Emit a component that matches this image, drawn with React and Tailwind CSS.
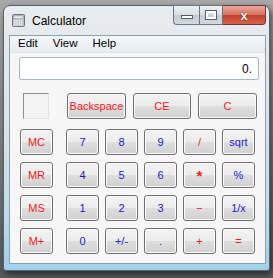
import React from "react";

const RED = "text-[#ee1c24]";
const BLUE = "text-[#2020d0]";

function Key({ label, color, w = "w-[33px]", extra = "" }) {
  return (
    <div
      className={`${w} h-[26px] rounded-[3px] border border-[#707070] bg-[linear-gradient(#f3f3f3_0%,#ececec_50%,#dfdfdf_50%,#d0d0d0_100%)] shadow-[inset_0_0_0_1px_#fbfbfb] flex items-center justify-center text-[11px] ${color} ${extra}`}
    >
      {label}
    </div>
  );
}

function CalcIcon() {
  return (
    <svg width="13" height="13" viewBox="0 0 13 13">
      <rect x="0.5" y="0.5" width="12" height="12" rx="1" fill="#b8bec6" stroke="#6c747e" />
      <rect x="2" y="2" width="9" height="2.5" fill="#eef3f8" stroke="#8a939c" strokeWidth="0.5" />
      {[0, 1, 2].map((r) =>
        [0, 1, 2, 3].map((c) => (
          <rect key={`${r}-${c}`} x={2 + c * 2.3} y={6 + r * 2.1} width="1.6" height="1.4" fill="#f4f6f8" />
        ))
      )}
    </svg>
  );
}

export default function App() {
  const rows = [
    [["MC", RED], ["7", BLUE], ["8", BLUE], ["9", BLUE], ["/", RED], ["sqrt", BLUE]],
    [["MR", RED], ["4", BLUE], ["5", BLUE], ["6", BLUE], ["*", RED, "font-bold text-[15px] pt-[3px]"], ["%", BLUE]],
    [["MS", RED], ["1", BLUE], ["2", BLUE], ["3", BLUE], ["−", RED], ["1/x", BLUE]],
    [["M+", RED], ["0", BLUE], ["+/-", BLUE], [".", BLUE], ["+", RED], ["=", RED]],
  ];

  return (
    <div className="w-[273px] h-[278px] overflow-hidden pt-[5px] pl-[3px] bg-[linear-gradient(#a8a8a8,#85888a_40%,#555a5c)] font-['Liberation_Sans',Arial,sans-serif]">
      {/* Window */}
      <div className="relative w-[267px] h-[266px] rounded-t-[7px] rounded-b-[3px] border border-[#59636d] bg-[linear-gradient(#e9ecef_0%,#dfe5ea_35%,#c4dbe9_75%,#9fd0ea_100%)] shadow-[2px_3px_6px_rgba(0,0,0,0.55)]">
        {/* Title bar */}
        <div className="h-[29px] flex items-center pl-[8px] gap-[7px]">
          <CalcIcon />
          <span className="text-[12px] text-black">Calculator</span>
        </div>

        {/* Caption buttons */}
        <div className="absolute top-[-1px] right-[3px] flex h-[20px]">
          <div className="w-[26px] h-full rounded-bl-[4px] border border-[#6b7681] border-r-0 bg-[linear-gradient(#eef1f4,#d6dce2_50%,#c3cbd3_50%,#d2dae1)] flex items-center justify-center">
            <div className="w-[12px] h-[4px] bg-white border border-[#55606a] mt-[3px]" />
          </div>
          <div className="w-[24px] h-full border border-[#6b7681] bg-[linear-gradient(#eef1f4,#d6dce2_50%,#c3cbd3_50%,#d2dae1)] flex items-center justify-center">
            <div className="w-[10px] h-[8px] border-[2px] border-white outline outline-1 outline-[#55606a]" />
          </div>
          <div className="w-[43px] h-full rounded-br-[4px] border border-[#6b3a34] border-l-0 bg-[linear-gradient(#e9a99f,#d8705f_50%,#c33f28_50%,#d4664c)] flex items-center justify-center">
            <span className="text-white font-bold text-[13px] leading-none [text-shadow:0_0_1px_#401010,0_0_1px_#401010]">x</span>
          </div>
        </div>

        {/* Client area */}
        <div className="ml-[5px] w-[257px] h-[229px] border border-[#8d9eae] bg-[#f7f7f7]">
          {/* Menu */}
          <div className="h-[17px] flex items-center gap-[15px] pl-[8px] text-[11.5px] text-black bg-[linear-gradient(#f6f8fb,#e6ebf1)] border-b border-[#dde3ea]">
            <span>Edit</span>
            <span>View</span>
            <span>Help</span>
          </div>

          {/* Display */}
          <div className="ml-[9px] mt-[4px] w-[240px] h-[23px] border border-[#a9b8c8] rounded-[2px] bg-white flex items-center justify-end pr-[6px] text-[12px] text-black">
            0.
          </div>

          {/* Top row */}
          <div className="flex items-center mt-[13px]">
            <div className="ml-[13px] w-[26px] h-[26px] border border-[#8c8c8c] border-r-[#e4e4e4] border-b-[#e4e4e4] bg-[#f3f3f3]" />
            <div className="ml-[18px] flex gap-[7px]">
              <Key label="Backspace" color={RED} w="w-[59px]" />
              <Key label="CE" color={RED} w="w-[58px]" />
              <Key label="C" color={RED} w="w-[59px]" />
            </div>
          </div>

          {/* Key grid */}
          <div className="mt-[10px] flex flex-col gap-[7px]">
            {rows.map((row, i) => (
              <div key={i} className="flex pl-[10px]">
                <Key label={row[0][0]} color={row[0][1]} />
                <div className="ml-[13px] flex gap-[6px]">
                  {row.slice(1).map(([l, c, x]) => (
                    <Key key={l} label={l} color={c} extra={x} />
                  ))}
                </div>
              </div>
            ))}
          </div>
        </div>
      </div>
    </div>
  );
}
